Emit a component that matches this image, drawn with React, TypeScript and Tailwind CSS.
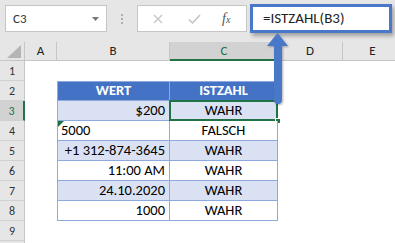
import React from "react";

const font = { fontFamily: '"Carlito", "Liberation Sans", Arial, sans-serif' };

type Cell = { text: string; align: "left" | "right" | "center" };

const rows: { b: Cell; c: Cell; band: boolean }[] = [
  { b: { text: "$200", align: "right" }, c: { text: "WAHR", align: "center" }, band: true },
  { b: { text: "5000", align: "left" }, c: { text: "FALSCH", align: "center" }, band: false },
  { b: { text: "+1 312-874-3645", align: "right" }, c: { text: "WAHR", align: "center" }, band: true },
  { b: { text: "11:00 AM", align: "right" }, c: { text: "WAHR", align: "center" }, band: false },
  { b: { text: "24.10.2020", align: "right" }, c: { text: "WAHR", align: "center" }, band: true },
  { b: { text: "1000", align: "right" }, c: { text: "WAHR", align: "center" }, band: false },
];

const alignClass = {
  left: "justify-start pl-[3px]",
  right: "justify-end pr-[4px]",
  center: "justify-center",
};

function RowHead({ n, active }: { n?: number; active?: boolean }) {
  return (
    <div
      className={`w-[25px] h-full shrink-0 flex items-center justify-center text-[12px] border-b border-[#d0d0d0] ${
        active
          ? "bg-[#d2d2d2] text-[#217346] border-r-2 border-r-[#217346]"
          : "bg-[#e6e6e6] text-[#333] border-r border-r-[#c6c6c6]"
      }`}
    >
      {n}
    </div>
  );
}

function FormulaBar() {
  return (
    <div className="h-[42px] bg-[#e6e6e6] flex items-start">
      {/* name box */}
      <div className="ml-[5px] mt-[5px] w-[102px] h-[27px] bg-white border border-[#c6c6c6] flex items-center justify-between pl-[7px] pr-[7px]">
        <span className="text-[13px] text-[#333]">C3</span>
        <svg width="7" height="4" viewBox="0 0 7 4">
          <path d="M0 0h7L3.5 4z" fill="#777" />
        </svg>
      </div>
      {/* drag dots */}
      <div className="w-[30px] h-[42px] flex flex-col items-center justify-center gap-[2px] pb-[5px]">
        <span className="w-[2px] h-[2px] bg-[#b0b0b0]" />
        <span className="w-[2px] h-[2px] bg-[#b0b0b0]" />
        <span className="w-[2px] h-[2px] bg-[#b0b0b0]" />
      </div>
      {/* cancel / enter / insert function */}
      <div className="mt-[5px] w-[110px] h-[27px] bg-white border border-[#c6c6c6] flex items-center">
        <svg className="ml-[15px]" width="10" height="10" viewBox="0 0 10 10">
          <path d="M1 1l8 8M9 1L1 9" stroke="#c4c4c4" strokeWidth="1.3" />
        </svg>
        <svg className="ml-[25px]" width="13" height="10" viewBox="0 0 13 10">
          <path d="M1 5.5l3.5 3.5L12 1" stroke="#c4c4c4" strokeWidth="1.6" fill="none" />
        </svg>
        <span
          className="ml-[21px] text-[14px] italic text-[#555] leading-none"
          style={{ fontFamily: '"Liberation Serif", serif' }}
        >
          f<span className="text-[10px]">x</span>
        </span>
      </div>
      {/* formula input */}
      <div className="ml-[3px] mt-[4px] w-[142px] h-[29px] bg-white border-[3px] border-[#4a78c8] shadow-[2px_3px_4px_rgba(0,0,0,0.3)] flex items-center pl-[10px]">
        <span className="text-[15px] text-[#222]">=ISTZAHL(B3)</span>
      </div>
    </div>
  );
}

function ColumnHeaders() {
  const cols = [
    { label: "A", w: "w-[32px]" },
    { label: "B", w: "w-[113px]" },
    { label: "C", w: "w-[108px]", active: true },
    { label: "D", w: "w-[65px]" },
    { label: "E", w: "w-[60px]" },
  ];
  return (
    <div className="flex h-[19px] bg-[#e6e6e6]">
      <div className="w-[25px] shrink-0 border-r border-[#c6c6c6] border-b border-b-[#c6c6c6] flex items-end justify-end pr-[3px] pb-[2px]">
        <svg width="14" height="13" viewBox="0 0 14 13">
          <path d="M14 0v13H0z" fill="#b5b5b5" />
        </svg>
      </div>
      {cols.map((c) => (
        <div
          key={c.label}
          className={`${c.w} shrink-0 flex items-center justify-center text-[13px] ${
            c.active
              ? "bg-[#d2d2d2] text-[#217346] border-b-2 border-[#217346]"
              : "text-[#222] border-r border-r-[#c6c6c6] border-b border-b-[#c6c6c6]"
          }`}
        >
          {c.label}
        </div>
      ))}
    </div>
  );
}

export default function App() {
  return (
    <div className="w-[395px] h-[243px] bg-white overflow-hidden relative" style={font}>
      <FormulaBar />
      <ColumnHeaders />

      {/* row 1 */}
      <div className="flex h-[20px]">
        <RowHead n={1} />
      </div>

      {/* row 2: table header */}
      <div className="flex h-[20px]">
        <RowHead n={2} />
        <div className="w-[32px] shrink-0" />
        <div className="w-[113px] shrink-0 bg-[#4472c4] border border-[#8ea9db] text-white font-bold text-[14.5px] flex items-center justify-center">
          WERT
        </div>
        <div className="w-[108px] shrink-0 bg-[#4472c4] border-t border-r border-b border-[#8ea9db] text-white font-bold text-[14.5px] flex items-center justify-center">
          ISTZAHL
        </div>
      </div>

      {rows.map((r, i) => (
        <div key={i} className="flex h-[20px]">
          <RowHead n={i + 3} active={i === 0} />
          <div className="w-[32px] shrink-0" />
          <div
            className={`relative w-[113px] shrink-0 border-l border-r border-b border-[#8ea9db] text-[14.5px] text-black flex items-center ${
              alignClass[r.b.align]
            } ${r.band ? "bg-[#d9e1f2]" : "bg-white"}`}
          >
            {r.b.align === "left" && (
              <svg className="absolute left-0 top-0" width="6" height="6" viewBox="0 0 6 6">
                <path d="M0 0h6L0 6z" fill="#1e7145" />
              </svg>
            )}
            {r.b.text}
          </div>
          <div
            className={`relative w-[108px] shrink-0 border-r border-b border-[#8ea9db] text-[14.5px] text-black flex items-center ${
              alignClass[r.c.align]
            } ${r.band ? "bg-[#d9e1f2]" : "bg-white"}`}
          >
            {r.c.text}
            {i === 0 && (
              <>
                <div className="absolute -left-[1px] -top-[1px] -right-[1px] -bottom-[1px] border-2 border-[#217346]" />
                <div className="absolute -right-[4px] -bottom-[4px] w-[6px] h-[6px] bg-[#217346] border border-white" />
              </>
            )}
          </div>
        </div>
      ))}

      <div className="flex h-[20px]">
        <RowHead n={9} />
      </div>
      <div className="flex h-[20px]">
        <RowHead />
      </div>

      {/* callout arrow from formula to the selected cell */}
      <svg className="absolute left-[265px] top-[32px]" width="26" height="74" viewBox="0 0 26 74">
        <defs>
          <filter id="arrowShadow" x="-30%" y="-10%" width="160%" height="130%">
            <feDropShadow dx="1" dy="1" stdDeviation="1" floodColor="#000" floodOpacity="0.3" />
          </filter>
        </defs>
        <g filter="url(#arrowShadow)">
          <path d="M12.5 1L23 14H17V68a4 4 0 0 1-8 0V14H2z" fill="#4a78c8" />
        </g>
      </svg>
    </div>
  );
}
